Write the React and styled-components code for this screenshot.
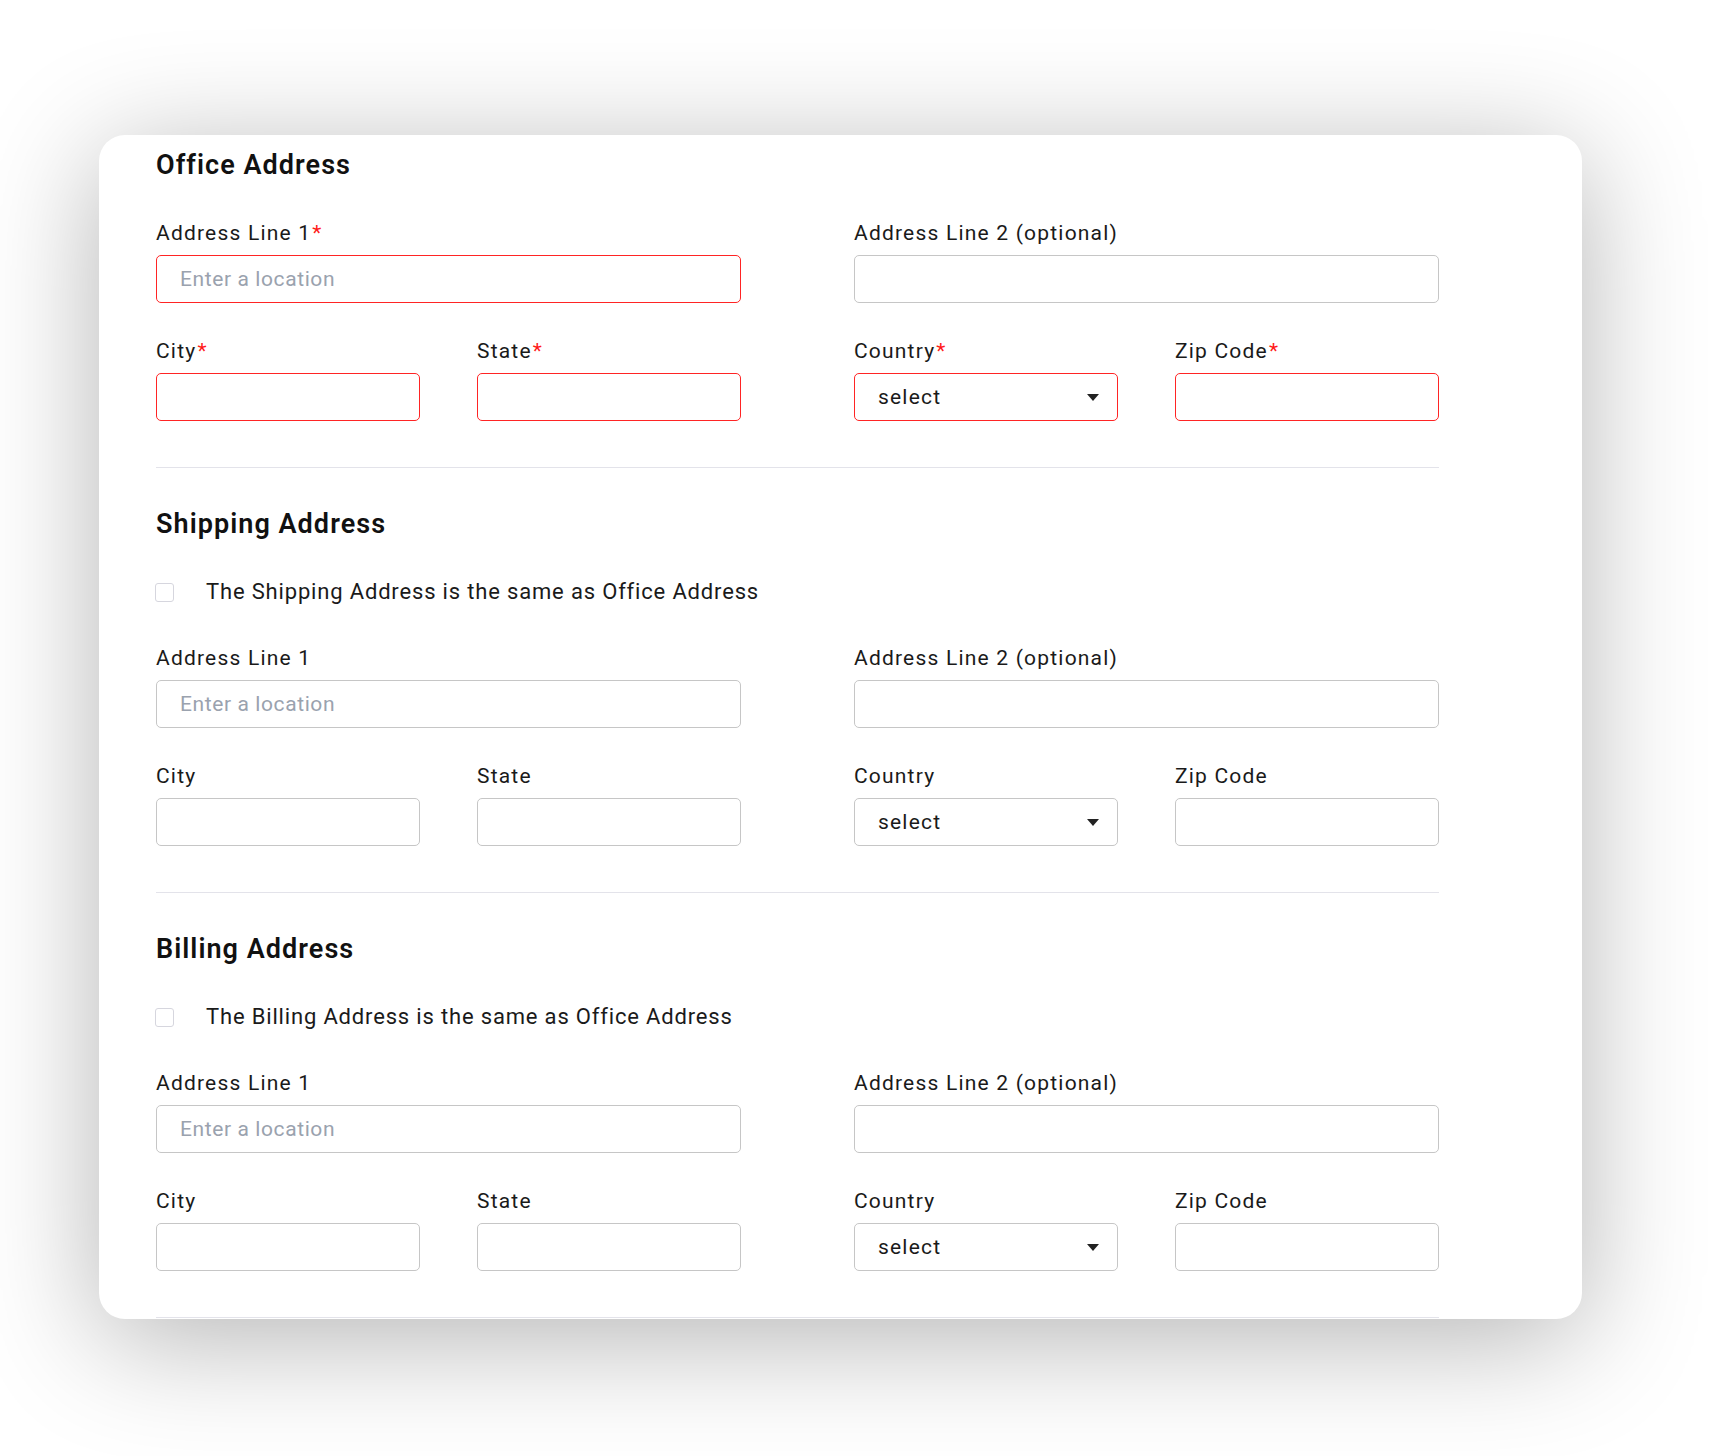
import React from 'react';
import styled, { createGlobalStyle } from 'styled-components';

const GlobalStyle = createGlobalStyle`
  html, body {
    margin: 0;
    padding: 0;
    background: #ffffff;
    font-family: Roboto, "Liberation Sans", Arial, sans-serif;
    color: #1a1a1a;
  }
  * {
    box-sizing: border-box;
  }
`;

const Page = styled.div`
  width: 1712px;
  height: 1456px;
  padding: 135px 0 0 99px;
  overflow: hidden;
`;

const Card = styled.div`
  width: 1483px;
  height: 1184px;
  background: #ffffff;
  border-radius: 26px;
  box-shadow: 0 20px 120px rgba(0, 0, 0, 0.3);
  padding: 14px 143px 0 57px;
  overflow: hidden;
`;

const Section = styled.section`
  display: flex;
  flex-direction: column;
  padding-bottom: 46px;
  border-bottom: 1px solid #e3e3ea;
  & + & {
    padding-top: 40px;
  }
`;

const Heading = styled.h2`
  margin: 0 0 40px;
  font-size: 27px;
  line-height: 32px;
  font-weight: 600;
  letter-spacing: 1.05px;
  color: #111111;
`;

const CheckRow = styled.label`
  display: flex;
  align-items: center;
  gap: 32px;
  height: 26px;
  margin: -1px 0 41px -1px;
  font-size: 22px;
  line-height: 26px;
  letter-spacing: 0.83px;
  color: #1a1a1a;
  cursor: pointer;
`;

const Box = styled.span`
  width: 19px;
  height: 19px;
  border: 1px solid #d6d6de;
  border-radius: 3px;
  background: #ffffff;
  flex: none;
`;

const Grid = styled.div`
  display: grid;
  grid-template-columns: 585px 585px;
  column-gap: 113px;
  row-gap: 36px;
`;

const Pair = styled.div`
  display: grid;
  grid-template-columns: 264px 264px;
  column-gap: 57px;
`;

const Field = styled.div`
  display: flex;
  flex-direction: column;
`;

const Label = styled.div`
  font-size: 21px;
  line-height: 25px;
  margin-bottom: 9px;
  color: #1a1a1a;
  letter-spacing: 1.2px;
  white-space: nowrap;
`;

const Star = styled.span`
  color: #ff1a1a;
  margin-left: 1px;
`;

const Input = styled.div`
  height: 48px;
  border: 1px solid ${({ $error }) => ($error ? '#ff2424' : '#c6c6c6')};
  border-radius: 5px;
  padding: 0 18px 0 23px;
  display: flex;
  align-items: center;
  justify-content: space-between;
  font-size: 21px;
  letter-spacing: ${({ $muted }) => ($muted ? '0.6px' : '1.2px')};
  color: ${({ $muted }) => ($muted ? '#9aa2ae' : '#1a1a1a')};
  background: #ffffff;
`;

const Caret = styled.span`
  width: 0;
  height: 0;
  border-left: 6.5px solid transparent;
  border-right: 6.5px solid transparent;
  border-top: 7px solid #222222;
`;

const TextField = ({ label, required, placeholder }) => (
  <Field>
    <Label>
      {label}
      {required && <Star>*</Star>}
    </Label>
    <Input $error={required} $muted={!!placeholder}>
      {placeholder || ''}
    </Input>
  </Field>
);

const SelectField = ({ label, required }) => (
  <Field>
    <Label>
      {label}
      {required && <Star>*</Star>}
    </Label>
    <Input $error={required}>
      <span>select</span>
      <Caret />
    </Input>
  </Field>
);

const AddressSection = ({ title, same, required }) => (
  <Section>
    <Heading>{title}</Heading>
    {same && (
      <CheckRow>
        <Box />
        The {same} Address is the same as Office Address
      </CheckRow>
    )}
    <Grid>
      <TextField label="Address Line 1" required={required} placeholder="Enter a location" />
      <TextField label="Address Line 2 (optional)" />
      <Pair>
        <TextField label="City" required={required} />
        <TextField label="State" required={required} />
      </Pair>
      <Pair>
        <SelectField label="Country" required={required} />
        <TextField label="Zip Code" required={required} />
      </Pair>
    </Grid>
  </Section>
);

export default function App() {
  return (
    <Page>
      <GlobalStyle />
      <Card>
        <AddressSection title="Office Address" required />
        <AddressSection title="Shipping Address" same="Shipping" />
        <AddressSection title="Billing Address" same="Billing" />
      </Card>
    </Page>
  );
}
